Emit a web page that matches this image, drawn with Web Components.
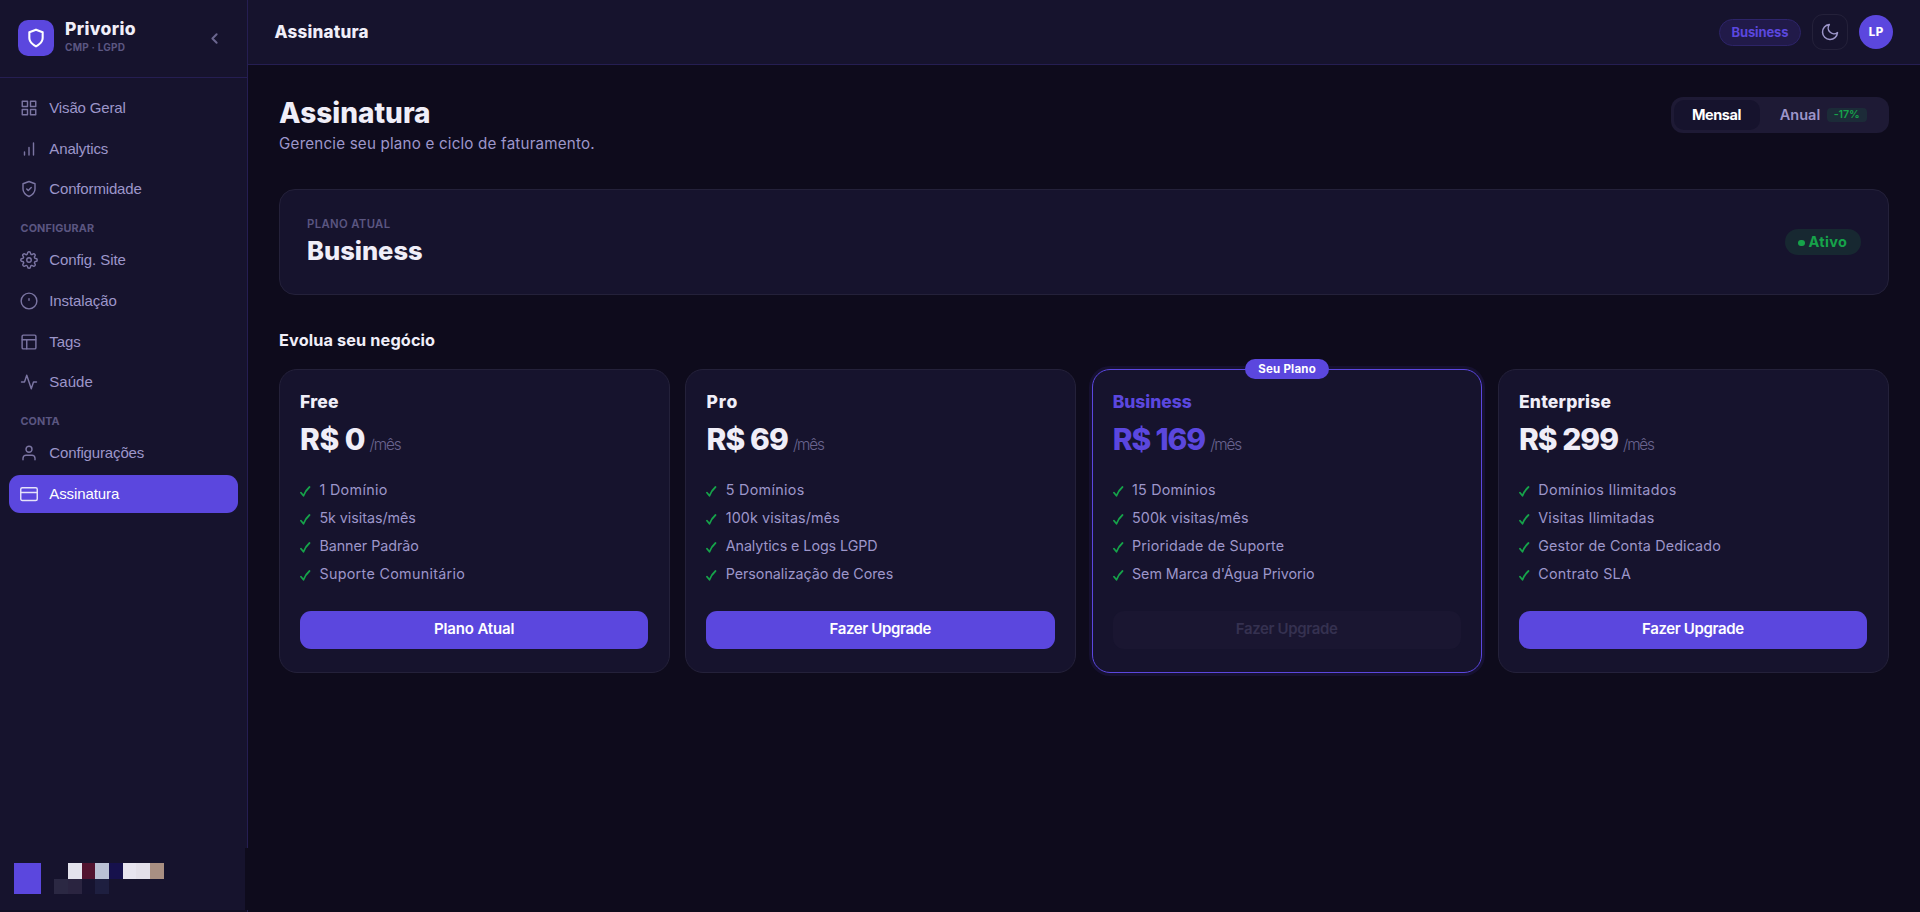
<!DOCTYPE html>
<html lang="pt-BR">
<head>
<meta charset="utf-8">
<title>Privorio · Assinatura</title>
<style>
:root{--bg:#0e0b1c;--surface:#16132d;--brand:#5b47de;--text:#f0eef8;--muted:#9d96ca;--dim:#5b5681;--line:#251e52;--edge:#24213a;--green:#16a34a}
body{margin:0;background:var(--bg);color:var(--text);font-family:Inter,"Liberation Sans",sans-serif}
</style>
</head>
<body>
<privorio-app></privorio-app>
<script>
const define = (name, html, setup) => customElements.define(name, class extends HTMLElement {
  connectedCallback() {
    if (this.shadowRoot) return;
    const t = document.createElement('template');
    t.innerHTML = typeof html === 'function' ? html(this) : html;
    this.attachShadow({mode: 'open'}).append(t.content.cloneNode(true));
    if (setup) setup(this);
  }
});

/* Single-line label whose tracking is adjusted to a given width */
define('fit-label', el => `<style>
:host{display:block;flex:none;white-space:nowrap;width:${el.getAttribute('w')}px}
span{display:inline-block}
</style><span><slot></slot></span>`, el => {
  const s = el.shadowRoot.querySelector('span');
  s.style.letterSpacing = '0px';
  const n = el.textContent.length;
  s.style.letterSpacing = ((+el.getAttribute('w') - s.getBoundingClientRect().width) / (n - 1)).toFixed(3) + 'px';
});

const ICONS = {
  shield: '<path d="M12 22s8-4 8-10V5l-8-3-8 3v7c0 6 8 10 8 10z"/>',
  chevron: '<path d="M15 18l-6-6 6-6"/>',
  grid: '<rect x="3" y="3" width="7" height="7"/><rect x="14" y="3" width="7" height="7"/><rect x="14" y="14" width="7" height="7"/><rect x="3" y="14" width="7" height="7"/>',
  bars: '<path d="M18 20V4M12 20V10M6 20v-4"/>',
  shieldcheck: '<path d="M12 22s8-4 8-10V5l-8-3-8 3v7c0 6 8 10 8 10z"/><path d="M9 12l2 2 4-4"/>',
  gear: '<circle cx="12" cy="12" r="3"/><path d="M19.4 15a1.65 1.65 0 0 0 .33 1.82l.06.06a2 2 0 1 1-2.83 2.83l-.06-.06a1.65 1.65 0 0 0-2.8 1.17V21a2 2 0 0 1-4 0v-.09A1.65 1.65 0 0 0 9 19.4a1.65 1.65 0 0 0-1.82.33l-.06.06a2 2 0 1 1-2.83-2.83l.06-.06A1.65 1.65 0 0 0 3.17 14H3a2 2 0 0 1 0-4h.09A1.65 1.65 0 0 0 4.6 9a1.65 1.65 0 0 0-.33-1.82l-.06-.06a2 2 0 1 1 2.83-2.83l.06.06A1.65 1.65 0 0 0 9 4.68 1.65 1.65 0 0 0 10 3.17V3a2 2 0 0 1 4 0v.09a1.65 1.65 0 0 0 2.82 1.18l.06-.06a2 2 0 1 1 2.83 2.83l-.06.06A1.65 1.65 0 0 0 19.4 9 1.65 1.65 0 0 0 20.91 10H21a2 2 0 0 1 0 4h-.09a1.65 1.65 0 0 0-1.51 1z"/>',
  info: '<circle cx="12" cy="12" r="10.5"/><path d="M12 9v2"/>',
  layout: '<rect x="2.8" y="2.8" width="18.4" height="18.4" rx="1.6"/><path d="M3 9h18M9 21V9"/>',
  pulse: '<path d="M22 12h-4l-3 9L9 3l-3 9H2"/>',
  user: '<path d="M20 21v-2a4 4 0 0 0-4-4H8a4 4 0 0 0-4 4v2"/><circle cx="12" cy="7" r="4"/>',
  card: '<rect x="1" y="3.6" width="22" height="17" rx="2"/><path d="M1 10h22"/>',
  moon: '<path d="M21 12.79A9 9 0 1 1 11.21 3 7 7 0 0 0 21 12.79z"/>',
  check: '<path d="M2 15.500 7 21.500Q11 11 19 4"/>'
};
define('ui-icon', el => `<style>:host{display:block;flex:none;line-height:0}svg{display:block}</style>
<svg width="${el.getAttribute('size')}" height="${el.getAttribute('size')}" viewBox="0 0 24 24" fill="none" stroke="currentColor" stroke-width="${el.getAttribute('stroke') || 1.8}" stroke-linecap="round" stroke-linejoin="round">${ICONS[el.getAttribute('name')]}</svg>`);

define('nav-item', el => `<style>
:host{display:flex;align-items:center;gap:11.300px;height:38px;padding-left:11px;border-radius:11px;color:var(--muted);font:15px/38px "Liberation Sans",Arial,sans-serif}
ui-icon{opacity:.75}
:host([active]){background:var(--brand);color:#fff}:host([active]) ui-icon{opacity:.85}
</style><ui-icon name="${el.getAttribute('icon')}" size="18" stroke="1.900"></ui-icon><fit-label w="${el.getAttribute('w')}">${el.getAttribute('label')}</fit-label>`);

define('nav-heading', el => `<style>
:host{display:block;height:20px;padding:7.600px 0 0 11.500px;font-weight:700;font-size:10.800px;line-height:20px;color:var(--dim)}
</style><fit-label w="${el.getAttribute('w')}">${el.getAttribute('label')}</fit-label>`);

define('pixel-user', `<style>
:host{display:flex;gap:13px;height:31px;padding-left:14px}
.a{width:27px;background:var(--brand)}
.g{display:grid;grid-template-columns:14px 14px 13px 14px 14px 13px 14px 14px;grid-template-rows:16px 15px}
</style><div class="a"></div><div class="g"></div>`, el => {
  const c = ['', '#e3e2ec', '#52132f', '#bac0d4', '#16114c', '#e7e4ef', '#e3dfe9', '#a98f82', '#2b2843', '#2a2440', '#16132f', '#1e1f40'];
  for (const v of c) { const d = document.createElement('div'); d.style.background = v; el.shadowRoot.querySelector('.g').append(d); }
});

define('app-sidebar', `<style>
:host{display:flex;flex-direction:column;width:248px;height:912px;flex:none}
.top{height:848px;background:var(--surface);border-right:1px solid var(--line);box-sizing:border-box}
.brand{display:flex;align-items:center;height:77px;border-bottom:1px solid var(--line);padding:0 24px 0 18px;box-sizing:content-box}
.logo{width:36px;height:36px;border-radius:10px;background:var(--brand);display:grid;place-items:center;color:#fff;margin-right:11px;margin-bottom:1px}
.n{font-weight:800;font-size:17.500px;line-height:22px}.s{font-weight:700;font-size:10px;line-height:15px;color:var(--dim)}
.names{flex:1;padding-bottom:4px}
.brand>ui-icon{color:#6b668f;margin-bottom:1px}
nav{display:flex;flex-direction:column;gap:2.700px;padding:11px 9px 0}
.foot{width:245px;height:62px;background:var(--surface);padding-top:15px;box-sizing:border-box}
.end{height:2px;background:#120f24;border-right:1px solid var(--line);width:247px}
</style>
<div class="top">
<div class="brand"><div class="logo"><ui-icon name="shield" size="20" stroke="2.500"></ui-icon></div>
<div class="names"><fit-label class="n" w="70.500">Privorio</fit-label><fit-label class="s" w="60">CMP · LGPD</fit-label></div>
<ui-icon name="chevron" size="17" stroke="2.800"></ui-icon></div>
<nav>
<nav-item icon="grid" label="Visão Geral" w="76.500"></nav-item>
<nav-item icon="bars" label="Analytics" w="59"></nav-item>
<nav-item icon="shieldcheck" label="Conformidade" w="92.500"></nav-item>
<nav-heading label="CONFIGURAR" w="73.500"></nav-heading>
<nav-item icon="gear" label="Config. Site" w="76.500"></nav-item>
<nav-item icon="info" label="Instalação" w="67.500"></nav-item>
<nav-item icon="layout" label="Tags" w="31.500"></nav-item>
<nav-item icon="pulse" label="Saúde" w="43.500"></nav-item>
<nav-heading label="CONTA" w="39"></nav-heading>
<nav-item icon="user" label="Configurações" w="95"></nav-item>
<nav-item icon="card" label="Assinatura" w="70" active></nav-item>
</nav></div>
<div class="foot"><pixel-user></pixel-user></div><div class="end"></div>`);

define('app-topbar', `<style>
:host{display:flex;align-items:center;height:64px;background:var(--surface);border-bottom:1px solid var(--line);padding:0 27px 0 26.500px;gap:11px}
.t{font-weight:800;font-size:17px}
.sp{flex:1}
.plan{box-sizing:border-box;height:27px;width:82px;display:flex;justify-content:center;align-items:center;border:1px solid #2d2468;background:#211a49;border-radius:14px;font-weight:700;font-size:13px;color:var(--brand);margin-top:1px;padding-bottom:2px}
.moon{box-sizing:border-box;width:36px;height:36px;border:1px solid var(--edge);border-radius:11px;display:grid;place-items:center;color:var(--muted)}
.av{width:34px;height:34px;border-radius:50%;background:var(--brand);display:grid;place-items:center;font-weight:800;font-size:11.500px;color:#fff}
</style><fit-label class="t" w="94">Assinatura</fit-label><div class="sp"></div>
<div class="plan"><fit-label w="57">Business</fit-label></div><div class="moon"><ui-icon name="moon" size="20"></ui-icon></div><div class="av"><fit-label w="14.500">LP</fit-label></div>`);

define('cycle-toggle', `<style>
:host{box-sizing:border-box;display:flex;width:218px;height:36px;padding:3px;border-radius:12px;background:#1e1a35;font-weight:600;font-size:14.500px;line-height:18px}
.on{width:86px;height:30px;border-radius:10px;background:var(--surface);color:#fff;display:grid;place-items:center;font-weight:700}
.on fit-label,.off>fit-label{margin-bottom:1px}
.off{display:flex;align-items:center;flex:1;padding-left:20px;color:var(--muted);gap:6.500px}
.b{width:40px;height:14px;border-radius:4px;background:#1c2b38;color:var(--green);font-size:10.700px;line-height:14px;display:grid;place-items:center}
</style><div class="on"><fit-label w="49.500">Mensal</fit-label></div><div class="off"><fit-label w="40.500">Anual</fit-label><div class="b"><fit-label w="26">-17%</fit-label></div></div>`);

define('current-plan', `<style>
:host{box-sizing:border-box;display:flex;align-items:center;justify-content:space-between;height:106px;border:1px solid var(--edge);border-radius:16px;background:var(--surface);padding:0 27px}
.l{font-weight:600;font-size:11.300px;line-height:18px;color:var(--dim)}
.n{font-weight:800;font-size:25.500px;line-height:36px}
.st{display:flex;align-items:center;justify-content:center;gap:3.500px;width:76px;height:26px;border-radius:13px;background:#172831;color:var(--green);font-weight:700;font-size:14.500px;line-height:24px}
.st fit-label{margin-bottom:1px}
i{width:6.500px;height:6.500px;border-radius:50%;background:currentColor;margin-top:2px}
</style><div><fit-label class="l" w="83">PLANO ATUAL</fit-label><fit-label class="n" w="115.500">Business</fit-label></div>
<div class="st"><i></i><fit-label w="38.500">Ativo</fit-label></div>`);

define('plan-card', el => {
  const a = n => el.getAttribute(n);
  return `<style>
:host{position:relative;box-sizing:border-box;display:block;height:304px;border:1px solid var(--edge);border-radius:18px;background:var(--surface);padding:20px 20.500px 0 20px}
:host([current]){border-color:var(--brand);box-shadow:0 0 0 3px #161131}
.n{font-weight:800;font-size:17.500px;line-height:24px}
.p{display:flex;align-items:baseline;gap:4px;height:48px;line-height:48px;font-weight:800;font-size:30px;padding-top:1px}
.m{font-weight:300;font-size:15.300px;color:#69648f}
:host([current]) .n,:host([current]) .v{color:var(--brand)}
.f{padding-top:13px;font-size:14.300px;line-height:28px;color:var(--muted)}
.r{display:flex;align-items:center;gap:7.300px}
.r ui-icon{color:var(--green);padding-top:2px}
.b{margin-top:22.500px;height:38px;line-height:36px;border-radius:11px;background:var(--brand);color:#fff;display:grid;place-items:center;font-weight:600;font-size:15px}
.b fit-label{margin-bottom:1px}
:host([current]) .b{background:#1a1631;color:#353150}
.tag{position:absolute;top:-11px;left:50%;margin-left:-42px;width:84px;height:20px;border-radius:10px;background:var(--brand);color:#fff;font-weight:700;font-size:11.500px;display:grid;place-items:center}
</style>${el.hasAttribute('current') ? '<div class="tag"><fit-label w="57.500">Seu Plano</fit-label></div>' : ''}
<fit-label class="n" w="${a('nw')}">${a('name')}</fit-label>
<div class="p"><fit-label class="v" w="${a('pw')}">${a('price')}</fit-label><fit-label class="m" w="32">/mês</fit-label></div>
<div class="f">${a('features').split('|').map(x => { const [t, w] = x.split(':'); return `<div class="r"><ui-icon name="check" size="12" stroke="3.600"></ui-icon><fit-label w="${w}">${t}</fit-label></div>`; }).join('')}</div>
<div class="b"><fit-label w="${a('cta') === 'Plano Atual' ? 80.5 : 102}">${a('cta')}</fit-label></div>`;
});

define('billing-page', `<style>
:host{display:block;padding:32px 31.300px 0 31.100px}
.head{display:flex;justify-content:space-between;height:92px}
.h{font-weight:800;font-size:28px;line-height:32px}
.d{font-size:15.200px;line-height:28px;color:var(--muted);margin-top:1px}
.e{font-weight:700;font-size:16.300px;line-height:28px;margin:31px 0 15px}
.cards{display:grid;grid-template-columns:repeat(4,1fr);gap:15.600px}
</style>
<div class="head"><div><fit-label class="h" w="151.500">Assinatura</fit-label><fit-label class="d" w="315.500">Gerencie seu plano e ciclo de faturamento.</fit-label></div><cycle-toggle></cycle-toggle></div>
<current-plan></current-plan>
<fit-label class="e" w="156">Evolua seu negócio</fit-label>
<div class="cards">
<plan-card name="Free" nw="38.500" price="R$ 0" pw="65.500" features="1 Domínio:68|5k visitas/mês:96.500|Banner Padrão:99.500|Suporte Comunitário:145.500" cta="Plano Atual"></plan-card>
<plan-card name="Pro" nw="31" price="R$ 69" pw="82.500" features="5 Domínios:78.500|100k visitas/mês:114|Analytics e Logs LGPD:152|Personalização de Cores:167.500" cta="Fazer Upgrade"></plan-card>
<plan-card current name="Business" nw="79" price="R$ 169" pw="93.500" features="15 Domínios:83.500|500k visitas/mês:116.500|Prioridade de Suporte:152|Sem Marca d'Água Privorio:182.500" cta="Fazer Upgrade"></plan-card>
<plan-card name="Enterprise" nw="92" price="R$ 299" pw="100" features="Domínios Ilimitados:138|Visitas Ilimitadas:116|Gestor de Conta Dedicado:182.500|Contrato SLA:92.500" cta="Fazer Upgrade"></plan-card>
</div>`);

define('privorio-app', `<style>
:host{display:flex;height:912px;overflow:hidden}
main{flex:1;min-width:0}
</style><app-sidebar></app-sidebar><main><app-topbar></app-topbar><billing-page></billing-page></main>`);
</script>
</body>
</html>
